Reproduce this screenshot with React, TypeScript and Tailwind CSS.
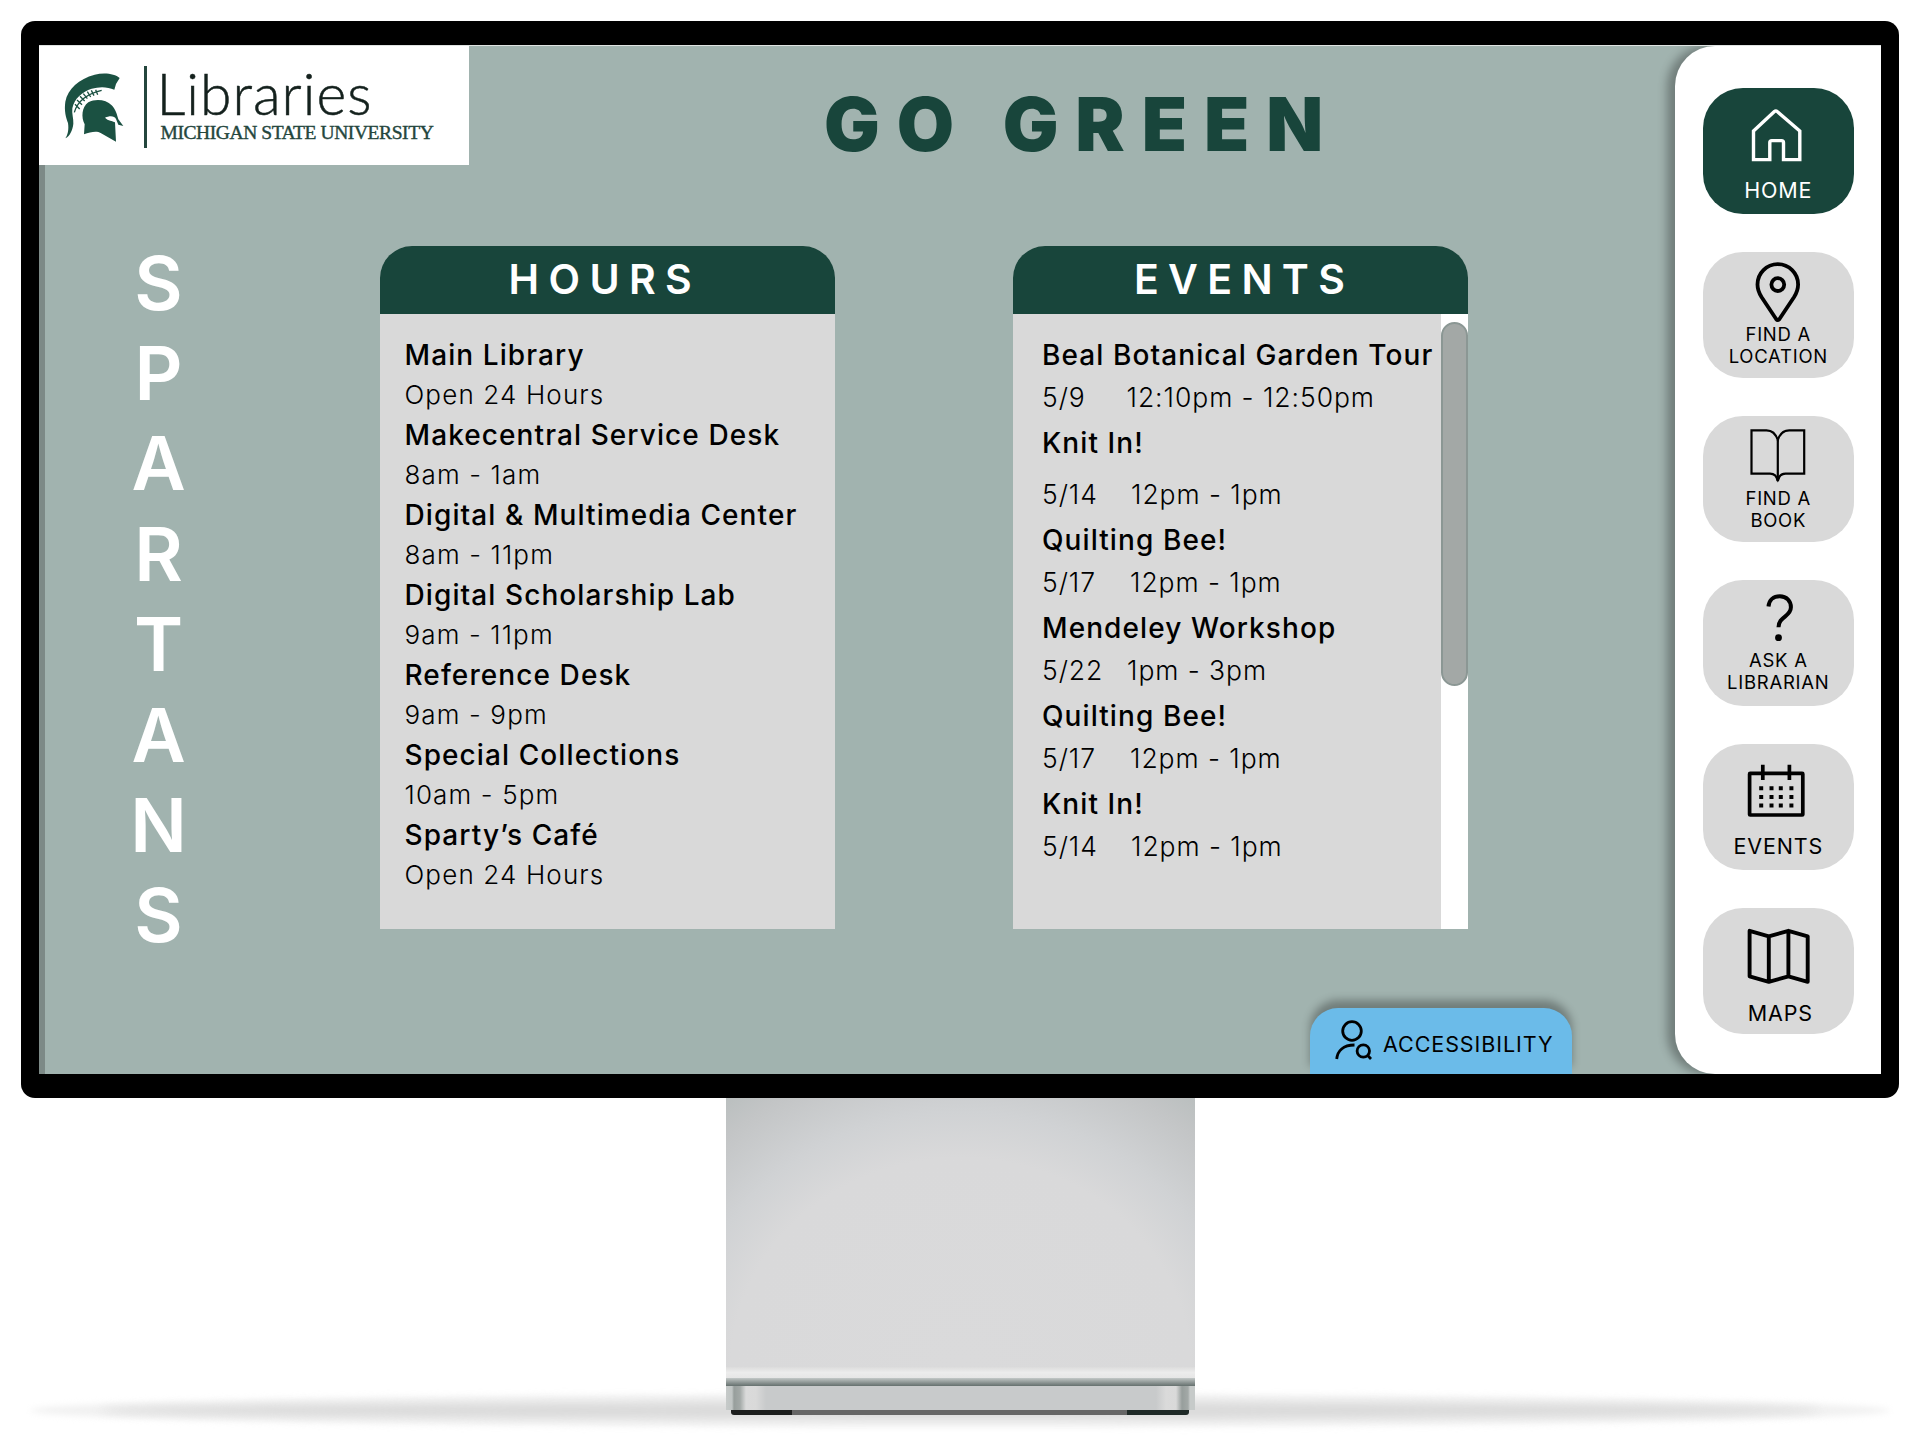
import React from "react";

const hours = [
  { name: "Main Library", time: "Open 24 Hours" },
  { name: "Makecentral Service Desk", time: "8am - 1am" },
  { name: "Digital & Multimedia Center", time: "8am - 11pm" },
  { name: "Digital Scholarship Lab", time: "9am - 11pm" },
  { name: "Reference Desk", time: "9am - 9pm" },
  { name: "Special Collections", time: "10am - 5pm" },
  { name: "Sparty’s Café", time: "Open 24 Hours" },
];

const events = [
  { name: "Beal Botanical Garden Tour", date: "5/9", time: "12:10pm - 12:50pm", col: "w-[84.5px]", row: "" },
  { name: "Knit In!", date: "5/14", time: "12pm - 1pm", col: "w-[89px]", row: "mt-[9px]" },
  { name: "Quilting Bee!", date: "5/17", time: "12pm - 1pm", col: "w-[88px]", row: "" },
  { name: "Mendeley Workshop", date: "5/22", time: "1pm - 3pm", col: "w-[85px]", row: "" },
  { name: "Quilting Bee!", date: "5/17", time: "12pm - 1pm", col: "w-[88px]", row: "" },
  { name: "Knit In!", date: "5/14", time: "12pm - 1pm", col: "w-[89px]", row: "" },
];

function HomeIcon() {
  return (
    <path
      d="M7.5 36 28.4 16.6q1.4-1.3 2.8 0L53.8 36v28.6H37.5v-17a2 2 0 0 0-2-2h-9.7a2 2 0 0 0-2 2v17H7.5z"
      strokeWidth="3.4"
    />
  );
}

function PinIcon() {
  return (
    <g strokeWidth="3.8">
      <path d="M11.5 25.5a20.3 20.3 0 0 1 40.6 0c0 5-1.5 8.5-4 12.5L33.5 60q-1.7 2.2-3.4 0L15.5 38c-2.5-4-4-7.5-4-12.5z" />
      <circle cx="31.8" cy="25.6" r="6.4" />
    </g>
  );
}

function BookIcon() {
  return (
    <g strokeWidth="2.2">
      <path d="M31.8 17c-1.8-5.5-5.8-9.7-11.3-9.7h-15v43.4H24c4 0 6.8 2.3 7.8 7.3 1-5 3.8-7.3 7.8-7.3h18.6V7.3h-15c-5.6 0-9.6 4.2-11.4 9.7z" />
      <path d="M31.8 17v41" />
      <path d="M29.4 53.5h4.8l-2.4 6z" fill="currentColor" stroke="none" />
    </g>
  );
}

function QuestionIcon() {
  return (
    <g>
      <path
        d="M22.5 19.5c.5-6.5 5-10.2 11.3-10.2 6.7 0 11.1 4.7 11.1 11 0 9.7-12.4 9-12.4 20"
        strokeWidth="4"
      />
      <circle cx="32.5" cy="50.7" r="3.4" fill="currentColor" stroke="none" />
    </g>
  );
}

function CalendarIcon() {
  return (
    <g strokeWidth="3.7">
      <rect x="3.6" y="22.4" width="53.2" height="41.6" rx="0.6" />
      <path d="M16.8 13.7V29M43.4 13.7V29" />
      <path d="M13.2 37.3h4M23.5 37.3h4M32.8 37.3h4M43.4 37.3h4" strokeWidth="4" />
      <path d="M13.2 46h4M23.5 46h4M32.8 46h4M43.4 46h4" strokeWidth="4" />
      <path d="M13.2 54.4h4M23.5 54.4h4M32.8 54.4h4M43.4 54.4h4" strokeWidth="4" />
    </g>
  );
}

function MapIcon() {
  return (
    <path
      d="M3.6 15.8 22.8 21.3 42.4 15.8 61.7 21.3V66.8L42.4 61.3 22.8 66.8 3.6 61.3zM22.8 21.3v45.5M42.4 15.8v45.5"
      strokeWidth="3.9"
      strokeLinejoin="round"
    />
  );
}

const nav = [
  { label: ["HOME"], icon: <HomeIcon />, active: true, pad: "mt-[20.5px]" },
  { label: ["FIND A", "LOCATION"], icon: <PinIcon />, pad: "" },
  { label: ["FIND A", "BOOK"], icon: <BookIcon />, pad: "" },
  { label: ["ASK A", "LIBRARIAN"], icon: <QuestionIcon />, pad: "-mt-[2px]" },
  { label: ["EVENTS"], icon: <CalendarIcon />, pad: "mt-[20.5px]" },
  { label: ["MAPS"], icon: <MapIcon />, pad: "mt-[23px] pl-1" },
];

function Logo() {
  return (
    <div className="flex h-[119px] w-[430px] bg-white">
      <svg className="mt-6 ml-[24px] h-[74px] w-[62px] shrink-0" viewBox="190 205 186 222">
        <path
          fill="#1b5142"
          d="M360 229C345 215 312 212 285 219 238 231 204 262 197 300c-4 28 2 48 8 64 3 20-1 36-8 46 13-6 22-24 24-44 1-16-5-30-3-46 6-30 30-50 58-59 24-7 48-6 68 3l5-17z"
        />
        <path
          fill="none"
          stroke="#1b5142"
          strokeWidth="4"
          d="M224 332q14-50 82-66M226 308l14 14M232 295l15 14M241 284l14 14M251 276l12 15M263 270l10 16M275 266l8 16M288 264l6 15"
        />
        <path
          fill="#1b5142"
          d="M253 398l2-30c-11-20-9-52 11-66 24-12 54-7 70 9 12 12 16 28 20 42l15 20-15-4-7-17c-4-10-19-11-33-4 9 10 23 9 30 14l3 58-46-26c-10-6-30-4-50 4z"
        />
      </svg>
      <div className="mt-5 ml-[19px] h-[82px] w-[2.5px] shrink-0 bg-[#24463d]" />
      <div className="ml-[10px] flex flex-col whitespace-nowrap">
        <span className="mt-[17.5px] font-[Lato] text-[57px] leading-[58px] font-light tracking-[1px] text-[#14211d] [-webkit-text-stroke:0.5px_#14211d]">
          Libraries
        </span>
        <span className="ml-[4px] font-['Liberation_Serif'] text-[19.5px] leading-[21px] tracking-[-0.42px] text-[#24463d] [-webkit-text-stroke:0.4px_#24463d]">
          MICHIGAN STATE UNIVERSITY
        </span>
      </div>
    </div>
  );
}

function Hours() {
  return (
    <div className="mt-[81px] h-[683px] w-[455px] overflow-hidden rounded-t-[32px] bg-[#d9d9d9]">
      <h2 className="h-[68px] bg-[#18453b] pl-[129px] text-[41px] leading-[66px] font-semibold tracking-[9.4px] text-white">
        HOURS
      </h2>
      <ul className="pt-[20.5px] pl-[25px] whitespace-nowrap">
        {hours.map((item) => (
          <li key={item.name} className="h-[80.1px]">
            <p className="text-[28px] leading-[40px] font-medium tracking-[0.039em]">{item.name}</p>
            <p className="text-[26px] leading-[40px] font-light tracking-[0.044em]">{item.time}</p>
          </li>
        ))}
      </ul>
    </div>
  );
}

function Events() {
  return (
    <div className="mt-[81px] ml-[178.5px] flex h-[683px] w-[455px] flex-col overflow-hidden rounded-t-[32px] bg-[#d9d9d9]">
      <h2 className="h-[68px] shrink-0 bg-[#18453b] pl-[121px] text-[41px] leading-[66px] font-semibold tracking-[9.3px] text-white">
        EVENTS
      </h2>
      <div className="flex flex-1">
        <ul className="w-[428px] pt-[20.5px] pl-[29px] whitespace-nowrap">
          {events.map((item, i) => (
            <li key={i} className="pb-[2.8px]">
              <p className="text-[28px] leading-[40px] font-medium tracking-[0.039em]">{item.name}</p>
              <p className={`flex text-[26.5px] leading-[45.2px] font-light tracking-[0.95px] ${item.row}`}>
                <span className={item.col}>{item.date}</span>
                <span>{item.time}</span>
              </p>
            </li>
          ))}
        </ul>
        <div className="w-[27px] bg-white pt-2">
          <div className="h-[364px] rounded-full border-2 border-[#8b9794] bg-[#a3a8a6]" />
        </div>
      </div>
    </div>
  );
}

function Sidebar() {
  return (
    <nav className="flex w-[206px] flex-col gap-[37.4px] rounded-l-[40px] bg-white pt-[41.9px] pl-[27.5px] shadow-[-8px_0_10px_0_rgba(0,0,0,0.3)]">
      {nav.map((item) => (
        <div
          key={item.label.join(" ")}
          className={`flex h-[126.6px] w-[151.6px] shrink-0 flex-col items-center rounded-[40px] ${
            item.active ? "bg-[#18453b] text-white" : "bg-[#d9d9d9] text-black"
          }`}
        >
          <svg
            className="mt-[7px] h-16 w-16 shrink-0 overflow-visible"
            viewBox="0 0 64 64"
            fill="none"
            stroke="currentColor"
          >
            {item.icon}
          </svg>
          <p
            className={`text-center leading-[22px] tracking-[0.04em] ${
              item.label.length > 1 ? "text-[18.5px]" : "text-[21.5px]"
            } ${item.pad}`}
          >
            {item.label.map((line) => (
              <span key={line} className="block">
                {line}
              </span>
            ))}
          </p>
        </div>
      ))}
    </nav>
  );
}

function Accessibility() {
  return (
    <div className="absolute bottom-0 left-[1271px] flex h-[66px] w-[262px] rounded-t-[28px] bg-[#6bbbe9] shadow-[0_-8px_8px_0_rgba(0,0,0,0.3)]">
      <svg className="mt-[11px] ml-6 h-11 w-10 shrink-0" viewBox="0 0 40 44" fill="none" stroke="#000" strokeWidth="2.8">
        <circle cx="18" cy="12" r="9.3" />
        <path d="M2.7 40C3.5 32 9 26 20.5 26" />
        <circle cx="29.3" cy="32" r="6.2" />
        <path d="m33.5 36.3 3.5 3.6" />
      </svg>
      <span className="ml-[9px] text-[21.5px] leading-[73px] tracking-[0.043em]">ACCESSIBILITY</span>
    </div>
  );
}

function Stand() {
  return (
    <div className="relative flex w-full flex-col items-center">
      <div className="absolute top-[296px] left-[30px] h-[33px] w-[1860px] rounded-[50%] bg-[#f1f1f1] blur-[3px]" />
      <div className="absolute top-[304px] left-[100px] h-[17px] w-[1720px] rounded-[50%] bg-[#dadada] blur-[4px]" />
      <div className="relative h-[269px] w-[469px] bg-[radial-gradient(ellipse_68%_108%_at_50%_100%,#dadadb_0%,#d9d9da_72%,#d0d2d4_88%,#c3c5c6_108%,#b4bbba_125%)]" />
      <div className="relative h-[11px] w-[469px] bg-gradient-to-b from-[#dcdcdc] via-[#ececec] to-[#e6e6e6]" />
      <div className="relative h-[8px] w-[469px] bg-gradient-to-b from-[#c3c8c7] to-[#66716f]" />
      <div className="relative h-[24px] w-[469px] bg-[linear-gradient(90deg,#c6cac9_0px,#c0c5c4_6px,#979e9c_8px,#a3a9a7_14px,#dadada_20px,#d9d9d9_30px,#c8cacb_40px,#c8cacb_430px,#dadada_440px,#d9d9d9_450px,#979e9c_456px,#a3a9a7_462px,#c6cac9_464px)]" />
      <div className="relative h-[5px] w-[458px] rounded-b-[3px] bg-[linear-gradient(90deg,#1c1e1d_0px,#1c1e1d_61px,#666666_61px,#666666_396px,#1f2a27_396px)]" />
    </div>
  );
}

export default function App() {
  return (
    <div className="flex h-[1448px] w-[1920px] flex-col items-center overflow-hidden bg-white pt-[21px] font-[Inter,sans-serif] text-black">
      <div className="h-[1077px] w-[1878px] shrink-0 rounded-[14px] bg-black px-[18px] pt-6 pb-6">
        <div className="relative flex h-full overflow-hidden border-t border-[#dfe3e2] bg-[#a1b3af]">
          <div className="flex flex-1 flex-col">
            <header className="flex">
              <Logo />
              <h1 className="ml-[355px] pt-[40.5px] text-[74px] leading-[74px] font-black tracking-[16.9px] text-[#18453b]">
                GO GREEN
              </h1>
            </header>
            <div className="flex flex-1">
              <div className="w-1.5 bg-[#7d8a87]" />
              <div className="mt-[72.5px] ml-[75px] w-[77px] text-center text-[74.5px] leading-[90.4px] font-semibold text-white">
                {"SPARTANS".split("").map((letter, i) => (
                  <div key={i}>{letter}</div>
                ))}
              </div>
              <div className="w-[182.5px]" />
              <Hours />
              <Events />
            </div>
          </div>
          <Sidebar />
          <Accessibility />
        </div>
      </div>
      <Stand />
    </div>
  );
}
